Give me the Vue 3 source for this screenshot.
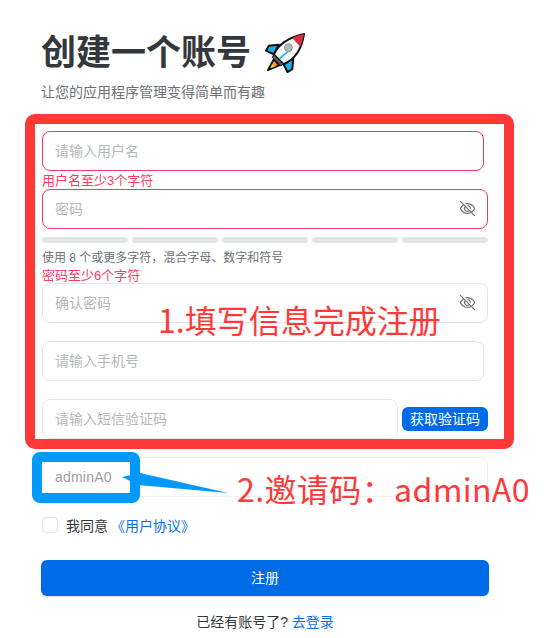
<template>
  <div class="page">
    <div class="head">
      <h1 class="title">创建一个账号
        <svg class="rocket" viewBox="0 0 42 42">
          <path d="M9 27 L3 38 L15 33 Z" fill="#f79329" stroke="#111" stroke-width="2" stroke-linejoin="round" />
          <path d="M7 32 L6 36 L11 34 Z" fill="#ffcb4c" />
          <path d="M14 12 L4 13 L1 18 L9 22 Z" fill="#1cb0f0" stroke="#111" stroke-width="2" stroke-linejoin="round" />
          <path d="M29 26 L28 37 L23 40 L19 32 Z" fill="#1cb0f0" stroke="#111" stroke-width="2" stroke-linejoin="round" />
          <path d="M9 22 C14 11 26 4 40 1 C38 15 31 27 19 32 Z" fill="#f4f6f7" stroke="#111" stroke-width="2" stroke-linejoin="round" />
          <path d="M28 5 C32 3 36 2 40 1 C39 5 38 9 36 14 Z" fill="#dd2e44" />
          <path d="M9 22 L19 32 L16 33.500 L7.500 25 Z" fill="#555c63" stroke="#111" stroke-width="1" />
          <path d="M15 26 L26 17" stroke="#1cb0f0" stroke-width="1.500" />
          <circle cx="24" cy="15" r="4" fill="#b4b8bc" stroke="#8d9296" stroke-width="1" />
        </svg>
      </h1>
      <p class="sub">让您的应用程序管理变得简单而有趣</p>
    </div>

    <form class="form" @submit.prevent>
      <input class="field field-short field-error" placeholder="请输入用户名" />
      <div class="err err-a">用户名至少3个字符</div>

      <div class="field-wrap">
        <input class="field field-error" placeholder="密码" />
        <svg class="eye" viewBox="0 0 24 24"><path v-for="d in eyePaths" :key="d" :d="d" /></svg>
      </div>
      <div class="bars">
        <span v-for="n in 5" :key="n" class="bar"></span>
      </div>
      <div class="hint">使用 8 个或更多字符，混合字母、数字和符号</div>
      <div class="err err-b">密码至少6个字符</div>

      <div class="field-wrap">
        <input class="field" placeholder="确认密码" />
        <svg class="eye" viewBox="0 0 24 24"><path v-for="d in eyePaths" :key="d" :d="d" /></svg>
      </div>
      <input class="field field-short gap" placeholder="请输入手机号" />

      <div class="sms gap">
        <input class="field sms-input" placeholder="请输入短信验证码" />
        <button type="button" class="sms-btn">获取验证码</button>
      </div>

      <input class="field field-faint gap" />

      <label class="agree">
        <span class="check"></span>
        <span>我同意</span>
        <a class="link">《用户协议》</a>
      </label>

      <button type="button" class="submit">注册</button>
      <p class="login">已经有账号了? <a class="link">去登录</a></p>
    </form>

    <!-- annotations drawn on top of the screenshot -->
    <div class="mark-red"></div>
    <div class="mark-blue">adminA0</div>
    <svg class="mark-arrow" viewBox="0 0 120 30">
      <polygon points="2,5 20,1 108,21 18,13" fill="#0099ff" />
    </svg>
    <div class="note note-1">1.填写信息完成注册</div>
    <div class="note note-2">2.邀请码：adminA0</div>
  </div>
</template>

<script setup>
const eyePaths = [
  'M9.900 5.200A9.600 9.600 0 0 1 12 5c6 0 9.500 5.200 10 7-.3 1-1.400 2.800-3.200 4.300',
  'M6.200 6.900C3.800 8.400 2.400 10.700 2 12c.5 1.800 4 7 10 7 1.900 0 3.500-.5 4.900-1.300',
  'M14.800 14.900a4 4 0 0 1-5.700-5.700',
  'M12.500 8a4 4 0 0 1 3.500 3.500',
  'M2 2l20 20',
]
</script>

<style>
html, body {
  margin: 0;
  background: #fff;
}
</style>

<style scoped>
.page {
  position: relative;
  width: 552px;
  height: 638px;
  overflow: hidden;
  box-sizing: border-box;
  padding: 31px 64px 0 42px;
  font-family: "Liberation Sans", "Noto Sans CJK SC", sans-serif;
  color: #33383d;
}
.title {
  display: flex;
  align-items: center;
  gap: 14px;
  margin: 0 0 0 -1px;
  height: 44px;
  font-size: 35px;
  font-weight: 700;
  line-height: 44px;
  color: #33383d;
}
.rocket {
  width: 41px;
  height: 41px;
}
.sub {
  margin: 7px 0 0 -1px;
  height: 20px;
  font-size: 14px;
  line-height: 20px;
  color: #6c7278;
}
.form {
  display: flex;
  flex-direction: column;
  margin-top: 29px;
}
.field {
  display: block;
  box-sizing: border-box;
  width: 100%;
  height: 40px;
  padding: 0 40px 0 12px;
  border: 1px solid #e3e5e8;
  border-radius: 8px;
  outline: none;
  background: #fff;
  font: inherit;
  font-size: 14px;
}
.field::placeholder {
  color: #b4b8bd;
}
.field-short {
  width: 442px;
}
.field-error {
  border-color: #f43a62;
}
.field-faint {
  border-color: #eff0f2;
}
.gap {
  margin-top: 18px;
}
.err {
  height: 18px;
  font-size: 13px;
  line-height: 20px;
  color: #ff3a60;
}
.err-b {
  height: 17px;
  line-height: 19px;
}
.field-wrap {
  position: relative;
}
.eye {
  position: absolute;
  top: 11px;
  right: 12px;
  width: 17px;
  height: 17px;
  fill: none;
  stroke: #6c7278;
  stroke-width: 1.700;
  stroke-linecap: round;
  stroke-linejoin: round;
}
.bars {
  display: flex;
  gap: 4px;
  margin-top: 8px;
}
.bar {
  flex: 1;
  height: 6px;
  border-radius: 3px;
  background: #e2e5e6;
}
.hint {
  margin-top: 5px;
  height: 18px;
  font-size: 12px;
  line-height: 20px;
  color: #6c7278;
}
.sms {
  display: flex;
  align-items: center;
  gap: 4px;
}
.sms-input {
  width: 356px;
  flex: none;
}
.sms-btn {
  width: 86px;
  height: 24px;
  padding: 0 0 3px;
  border: 0;
  border-radius: 6px;
  background: #006be6;
  color: #fff;
  font: inherit;
  font-size: 14px;
}
.agree {
  display: flex;
  align-items: center;
  margin-top: 19px;
  height: 18px;
  font-size: 14px;
  color: #33383d;
}
.check {
  box-sizing: border-box;
  width: 16px;
  height: 16px;
  margin-right: 8px;
  border: 1px solid #dfe2e5;
  border-radius: 4px;
}
.link {
  color: #0a6fe6;
}
.agree .link {
  margin-left: 3px;
}
.submit {
  width: 448px;
  height: 36px;
  margin: 26px 0 0 -1px;
  padding: 0 0 3px;
  border: 0;
  border-radius: 6px;
  background: #006be6;
  box-shadow: 0 1px 2px rgba(0, 0, 0, 0.15);
  color: #fff;
  font: inherit;
  font-size: 14px;
}
.login {
  margin: 16px 0 0;
  font-size: 14px;
  line-height: 20px;
  text-align: center;
}
.mark-red {
  position: absolute;
  left: 25px;
  top: 114px;
  box-sizing: border-box;
  width: 489px;
  height: 335px;
  border: 10px solid #ff3838;
  border-radius: 10px;
}
.mark-blue {
  position: absolute;
  left: 32px;
  top: 452px;
  box-sizing: border-box;
  width: 108px;
  height: 51px;
  padding-left: 13px;
  border: 10px solid #0099ff;
  border-radius: 8px;
  background: #fff;
  font-size: 14px;
  line-height: 31px;
  color: #9a9ea3;
  letter-spacing: 0.2px;
}
.mark-arrow {
  position: absolute;
  left: 120px;
  top: 472px;
  width: 120px;
  height: 30px;
}
.note {
  position: absolute;
  font-family: "Noto Sans CJK SC", sans-serif;
  font-size: 32px;
  line-height: 40px;
  white-space: nowrap;
  color: #ff3838;
}
.note-1 {
  left: 158px;
  top: 299px;
}
.note-2 {
  left: 237px;
  top: 468px;
  letter-spacing: 0.4px;
}
</style>
